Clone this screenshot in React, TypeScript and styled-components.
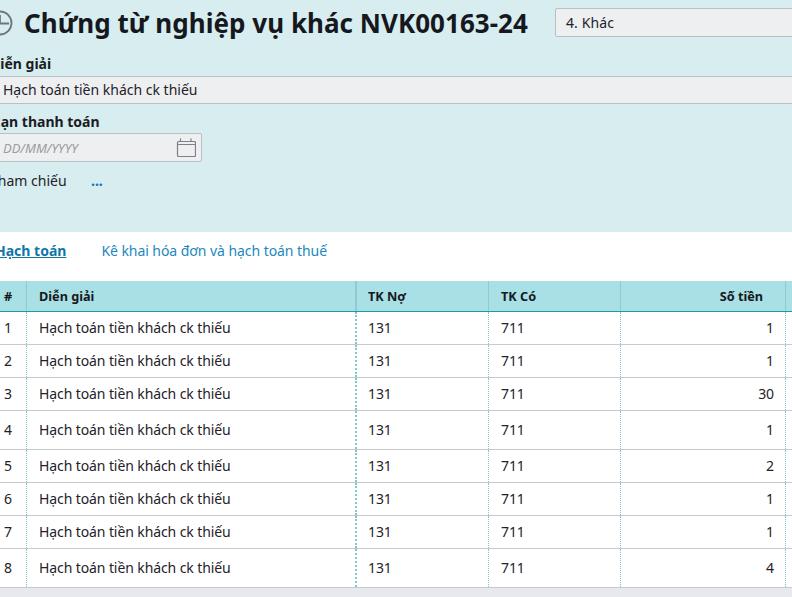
import React from 'react';
import styled, { createGlobalStyle } from 'styled-components';

const GlobalStyle = createGlobalStyle`
  html, body {
    margin: 0;
    padding: 0;
    background: #fff;
    overflow: hidden;
  }
  body {
    font-family: 'Noto Sans', 'Open Sans', sans-serif;
    font-size: 14px;
    color: #1f2229;
  }
`;

const rows = [
  { no: 1, amount: 1, tall: false },
  { no: 2, amount: 1, tall: false },
  { no: 3, amount: 30, tall: false },
  { no: 4, amount: 1, tall: true },
  { no: 5, amount: 2, tall: false },
  { no: 6, amount: 1, tall: false },
  { no: 7, amount: 1, tall: false },
  { no: 8, amount: 4, tall: true },
];

function ClockIcon() {
  return (
    <svg width='26' height='26' viewBox='0 0 26 26' fill='none' stroke='#707478' strokeWidth='1.8'>
      <circle cx='13' cy='13' r='11.5' />
      <path d='M13 5v8.5H22' />
    </svg>
  );
}

function CalendarIcon() {
  return (
    <svg width='20' height='20' viewBox='0 0 20 20' fill='none' stroke='#7d8186' strokeWidth='1.2'>
      <rect x='1.5' y='3.5' width='18' height='15' rx='1' />
      <path d='M1.5 6.5h18M4.5 0.5v3M15 0.5v3' />
    </svg>
  );
}

export default function App(): JSX.Element {
  return (
    <Viewport>
      <GlobalStyle />
      <Scrolled>
        <FormPanel>
          <TitleRow>
            <ClockSlot>
              <ClockIcon />
            </ClockSlot>
            <Title>Chứng từ nghiệp vụ khác NVK00163-24</Title>
            <Select>4. Khác</Select>
          </TitleRow>
          <Label>Diễn giải</Label>
          <TextInput>Hạch toán tiền khách ck thiếu</TextInput>
          <Label $top={8}>Hạn thanh toán</Label>
          <DateInput>
            <Placeholder>DD/MM/YYYY</Placeholder>
            <CalendarIcon />
          </DateInput>
          <RefRow>
            <RefLabel>Tham chiếu</RefLabel>
            <RefMore>...</RefMore>
          </RefRow>
        </FormPanel>
        <Tabs>
          <ActiveTab>Hạch toán</ActiveTab>
          <Tab>Kê khai hóa đơn và hạch toán thuế</Tab>
        </Tabs>
        <Table>
          <HeaderRow>
            <HeadCell $w={37} $align='center'>#</HeadCell>
            <HeadCell $w={330} $strong>Diễn giải</HeadCell>
            <DebitHead $w={132}>TK Nợ</DebitHead>
            <HeadCell $w={132}>TK Có</HeadCell>
            <AmountHead $w={165} $align='right'>Số tiền</AmountHead>
            <HeadCell $w={60} />
          </HeaderRow>
          {rows.map((row) => (
            <BodyRow key={row.no} $tall={row.tall}>
              <Cell $w={37} $align='center'>{row.no}</Cell>
              <Cell $w={330} $strong>Hạch toán tiền khách ck thiếu</Cell>
              <DebitCell $w={132}>131</DebitCell>
              <Cell $w={132}>711</Cell>
              <AmountCell $w={165} $align='right'>{row.amount}</AmountCell>
              <Cell $w={60} />
            </BodyRow>
          ))}
        </Table>
        <Footer />
      </Scrolled>
    </Viewport>
  );
}

const Viewport = styled.div`
  width: 792px;
  height: 597px;
  overflow: hidden;
`;

const Scrolled = styled.div`
  width: 1040px;
  margin-left: -10px;
`;

const FormPanel = styled.div`
  height: 232px;
  background: #d7edf0;
  overflow: hidden;
`;

const TitleRow = styled.div`
  display: flex;
  align-items: center;
  height: 45px;
`;

const ClockSlot = styled.div`
  display: flex;
  width: 37px;
  margin-left: -3px;
`;

const Title = styled.h1`
  margin: 0 27px 0 0;
  font-size: 26px;
  line-height: 34px;
  font-weight: 700;
  letter-spacing: 0.03px;
  color: #16181d;
  white-space: nowrap;
`;

const Select = styled.div`
  box-sizing: border-box;
  width: 400px;
  height: 29px;
  margin-top: -1px;
  padding-left: 10px;
  display: flex;
  align-items: center;
  letter-spacing: 0.15px;
  background: #eeeff1;
  border: 1px solid #b9c0c4;
  border-radius: 2px;
`;

const Label = styled.div<{ $top?: number }>`
  margin-top: ${(p) => p.$top ?? 9}px;
  font-weight: 700;
  line-height: 20px;
  color: #1a1c22;
`;

const TextInput = styled.div`
  box-sizing: border-box;
  height: 28px;
  margin-top: 2px;
  padding: 0 0 2px 13px;
  display: flex;
  align-items: center;
  background: #eeeff1;
  border-top: 1px solid #b9c0c4;
  border-bottom: 1px solid #b9c0c4;
`;

const DateInput = styled.div`
  box-sizing: border-box;
  width: 212px;
  height: 29px;
  margin-top: 1px;
  padding: 0 5px 0 12px;
  display: flex;
  align-items: center;
  justify-content: space-between;
  background: #eeeff1;
  border: 1px solid #b9c0c4;
  border-radius: 2px;
`;

const Placeholder = styled.span`
  font-size: 13px;
  font-style: italic;
  color: #9a9ca0;
`;

const RefRow = styled.div`
  display: flex;
  align-items: center;
  margin-top: 9px;
  line-height: 20px;
`;

const RefLabel = styled.span`
  width: 101px;
`;

const RefMore = styled.span`
  font-weight: 700;
  color: #0e76bc;
`;

const Tabs = styled.div`
  display: flex;
  gap: 35px;
  height: 49px;
  padding: 9px 0 0 5px;
  align-items: flex-start;
  box-sizing: border-box;
  line-height: 20px;
`;

const ActiveTab = styled.a`
  font-weight: 700;
  color: #0e76a8;
  text-decoration: underline;
`;

const Tab = styled.a`
  color: #2388bb;
  letter-spacing: -0.06px;
`;

const Table = styled.div`
  display: flex;
  flex-direction: column;
`;

const HeaderRow = styled.div`
  display: flex;
  height: 31px;
  box-sizing: border-box;
  background: #a9e0e5;
  border-bottom: 1px solid #2098a5;
`;

const BodyRow = styled.div<{ $tall: boolean }>`
  display: flex;
  height: ${(p) => (p.$tall ? 39 : 33)}px;
  box-sizing: border-box;
  border-bottom: 1px solid #c8c9cb;
`;

interface CellProps {
  $w: number;
  $align?: string;
  $strong?: boolean;
}

const HeadCell = styled.div<CellProps>`
  box-sizing: border-box;
  width: ${(p) => p.$w}px;
  padding: 0 12px;
  display: flex;
  align-items: center;
  justify-content: ${(p) =>
    p.$align === 'right' ? 'flex-end' : p.$align === 'center' ? 'center' : 'flex-start'};
  font-size: 12.7px;
  font-weight: 700;
  color: #16181d;
  border-right: ${(p) => (p.$strong ? 2 : 1)}px solid #8fcbd0;
`;

const DebitHead = styled(HeadCell)`
  padding-left: 11px;
`;

const AmountHead = styled(HeadCell)`
  padding-right: 22px;
`;

const Cell = styled.div<CellProps>`
  box-sizing: border-box;
  width: ${(p) => p.$w}px;
  padding: 0 12px 2px;
  display: flex;
  align-items: center;
  justify-content: ${(p) =>
    p.$align === 'right' ? 'flex-end' : p.$align === 'center' ? 'center' : 'flex-start'};
  letter-spacing: -0.1px;
  border-right: ${(p) => (p.$strong ? 2 : 1)}px dotted #7fc8cd;
`;

const DebitCell = styled(Cell)`
  padding-left: 11px;
`;

const AmountCell = styled(Cell)`
  padding-right: 11px;
`;

const Footer = styled.div`
  height: 40px;
  background: #e8e9ee;
  border-top: 1px solid #c8c9cb;
  margin-top: -1px;
`;
